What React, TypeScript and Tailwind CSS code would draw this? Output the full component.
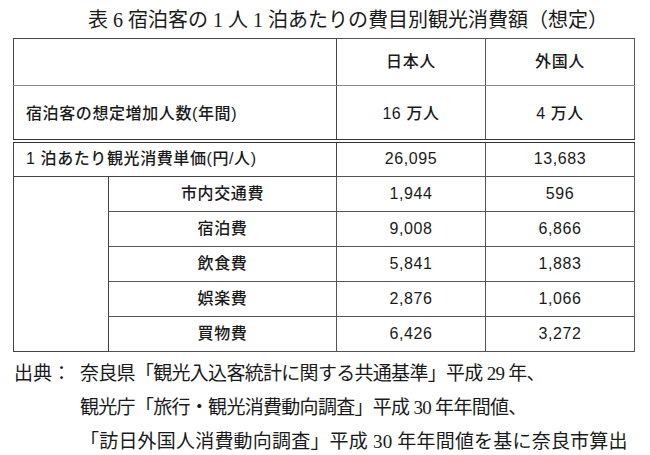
import React from 'react';

const sans = { fontFamily: '"Liberation Sans", "Noto Sans CJK JP", sans-serif' };

type SubRow = { label: string; jp: string; foreign: string };

const subRows: SubRow[] = [
  { label: '市内交通費', jp: '1,944', foreign: '596' },
  { label: '宿泊費', jp: '9,008', foreign: '6,866' },
  { label: '飲食費', jp: '5,841', foreign: '1,883' },
  { label: '娯楽費', jp: '2,876', foreign: '1,066' },
  { label: '買物費', jp: '6,426', foreign: '3,272' },
];

const cell = 'border border-[#555] text-center align-middle';
const dbl = 'border-b-4 [border-bottom-style:double] border-b-[#333]';

const App: React.FC = () => {
  return (
    <div className="w-[650px] h-[455px] bg-white text-[#1a1a1a] overflow-hidden">
      <h1 className="h-[38px] pl-[88px] pt-[7px] text-[20px] leading-[26px] whitespace-nowrap font-['Liberation_Serif','Noto_Sans_CJK_JP',serif]">
        表 6 宿泊客の 1 人 1 泊あたりの費目別観光消費額（想定）
      </h1>

      <div className="pl-[13px]">
        <table className="border-collapse w-[622px] table-fixed text-[16px] tracking-[0.6px] font-medium" style={sans}>
          <colgroup>
            <col className="w-[95px]" />
            <col className="w-[228px]" />
            <col className="w-[149px]" />
            <col className="w-[149px]" />
          </colgroup>
          <tbody>
            <tr className="h-[47px]">
              <td colSpan={2} className="border border-[#444] border-b-[#888]" />
              <td className={`${cell} border-b-[#888]`}>日本人</td>
              <td className={`${cell} border-b-[#888]`}>外国人</td>
            </tr>
            <tr className="h-[55px]">
              <td colSpan={2} className={`border border-[#444] ${dbl} text-left pl-3 pt-1`}>
                宿泊客の想定増加人数(年間)
              </td>
              <td className={`${cell} ${dbl} pt-1`}>16 万人</td>
              <td className={`${cell} ${dbl} pt-1`}>4 万人</td>
            </tr>
            <tr className="h-[36px]">
              <td colSpan={2} className="border border-[#444] text-left pl-3">
                1 泊あたり観光消費単価(円/人)
              </td>
              <td className={cell}>26,095</td>
              <td className={cell}>13,683</td>
            </tr>
            {subRows.map((row, i) => (
              <tr key={row.label} className="h-[35px]">
                {i === 0 && <td rowSpan={subRows.length} className="border border-[#444] border-t-0" />}
                <td className={cell}>{row.label}</td>
                <td className={cell}>{row.jp}</td>
                <td className={cell}>{row.foreign}</td>
              </tr>
            ))}
          </tbody>
        </table>
      </div>

      <div className="pt-[5px] text-[19px] leading-[34px] whitespace-nowrap font-['Liberation_Serif','Noto_Sans_CJK_JP',serif]">
        <div className="flex">
          <span className="w-[80px] pl-[14px]">出典：</span>
          <span className="tracking-[-0.7px]">奈良県「観光入込客統計に関する共通基準」平成 29 年、</span>
        </div>
        <div className="pl-[80px] tracking-[-0.7px]">観光庁「旅行・観光消費動向調査」平成 30 年年間値、</div>
        <div className="pl-[80px] tracking-[0.2px]">「訪日外国人消費動向調査」平成 30 年年間値を基に奈良市算出</div>
      </div>
    </div>
  );
};

export default App;
